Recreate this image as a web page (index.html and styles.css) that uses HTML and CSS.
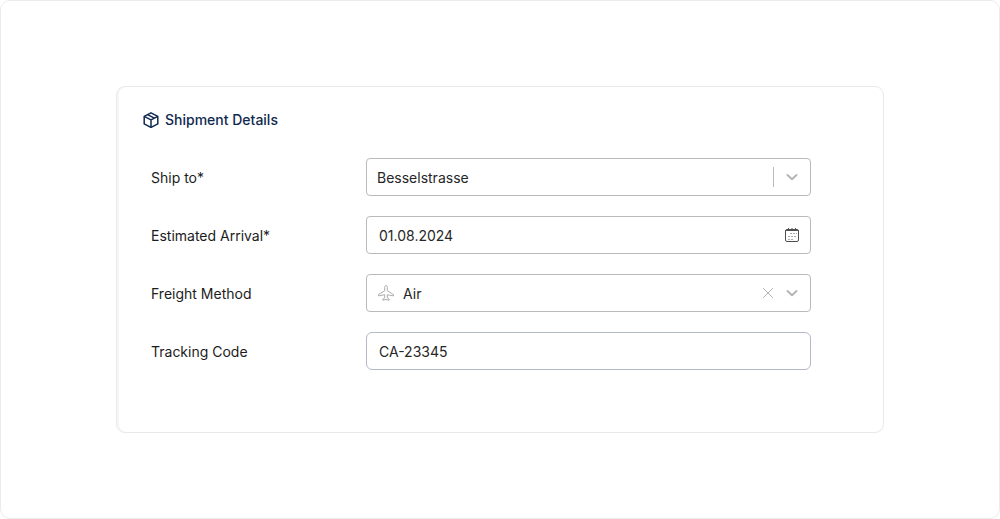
FILE: index.html
```html
<!DOCTYPE html>
<html lang="en">
<head>
  <meta charset="UTF-8">
  <meta name="viewport" content="width=device-width, initial-scale=1">
  <title>Shipment Details</title>
  <link rel="stylesheet" href="styles.css">
</head>
<body>

<main class="page">
  <form class="card">
    <h2 class="card-title">
      <svg class="title-icon" viewBox="0 0 16 16" aria-hidden="true">
        <path d="M8 .8 14.8 4.3v7.6L8 15.4 1.2 11.9V4.3z"/>
        <path d="M1.2 4.3 8 7.8l6.8-3.5M8 7.8v7.6M4.6 2.6l6.8 3.5"/>
      </svg>
      Shipment Details
    </h2>

    <div class="rows">
      <div class="row">
        <label for="shipTo">Ship to*</label>
        <div class="field">
          <select id="shipTo" class="control control-select">
            <option>Besselstrasse</option>
          </select>
          <span class="icons">
            <span class="separator"></span>
            <svg class="chevron" viewBox="0 0 20 20" aria-hidden="true">
              <path d="M5.5 8 10 12.2 14.5 8"/>
            </svg>
          </span>
        </div>
      </div>

      <div class="row">
        <label for="arrival">Estimated Arrival*</label>
        <div class="field">
          <input type="text" id="arrival" class="control" value="01.08.2024">
          <span class="icons">
            <svg class="calendar" viewBox="0 0 16 16" aria-hidden="true">
              <rect x="1.5" y="2.5" width="13" height="12" rx="1.5"/>
              <path d="M1.5 3.5h13M4.5 1v2.5M8 1v2.5M11.5 1v2.5"/>
              <path class="days" d="M6 6.5h7M4 9.5h9M4 12.5h6"/>
            </svg>
          </span>
        </div>
      </div>

      <div class="row">
        <label for="freight">Freight Method</label>
        <div class="field">
          <svg class="plane" viewBox="0 0 16 16" aria-hidden="true">
            <path d="M8 .5c-.9 0-1.3.9-1.3 1.9v3.4L.8 9.3c-.4.3-.5.8-.3 1.6l6.2-1.2v3.2l-1.9 1.3v1L8 14.5l3.2.7v-1l-1.9-1.3V9.7l6.2 1.2c.2-.8.1-1.3-.3-1.6L9.3 5.8V2.4C9.3 1.4 8.9.5 8 .5z"/>
          </svg>
          <select id="freight" class="control control-select control-with-icon">
            <option>Air</option>
          </select>
          <span class="icons">
            <button type="button" class="clear" aria-label="Clear">
              <svg viewBox="0 0 12 12" aria-hidden="true">
                <path d="M1.2 1.2l9.6 9.6M10.8 1.2 1.2 10.8"/>
              </svg>
            </button>
            <svg class="chevron" viewBox="0 0 20 20" aria-hidden="true">
              <path d="M5.5 8 10 12.2 14.5 8"/>
            </svg>
          </span>
        </div>
      </div>

      <div class="row">
        <label for="tracking">Tracking Code</label>
        <div class="field">
          <input type="text" id="tracking" class="control control-tracking" value="CA-23345">
        </div>
      </div>
    </div>
  </form>
</main>

</body>
</html>
```

FILE: styles.css
```css
* {
  box-sizing: border-box;
}
body {
  margin: 0;
  background: #fff;
  color: #1c1c1c;
  font-family: Inter, "Liberation Sans", sans-serif;
  font-size: 14px;
  line-height: 20px;
}
.page {
  display: flex;
  align-items: center;
  justify-content: center;
  min-height: 100vh;
  padding: 24px;
  border: 1px solid #ebebeb;
  border-radius: 10px;
}
.card {
  width: 100%;
  max-width: 768px;
  padding: 23px 26px 62px;
  border: 1px solid #e9e9e9;
  border-radius: 9px;
  box-shadow: inset 2px 0 0 #f6f6f6;
}
.card-title {
  display: flex;
  align-items: center;
  gap: 6px;
  margin: 0 0 28px;
  color: #10294f;
  font-size: 14px;
  font-weight: 500;
}
.title-icon {
  width: 16px;
  height: 16px;
  fill: none;
  stroke: currentColor;
  stroke-width: 1.5;
  stroke-linejoin: round;
}
.rows {
  display: grid;
  gap: 20px;
  padding: 0 46px 0 8px;
}
.row {
  display: flex;
  align-items: center;
}
.row label {
  flex: 0 0 215px;
  padding-top: 2px;
}
.field {
  position: relative;
  flex: 1;
  min-width: 0;
}

/* inputs and selects */
.control {
  display: block;
  width: 100%;
  height: 38px;
  padding: 0 12px;
  border: 1px solid #bababa;
  border-radius: 4px;
  background: #fff;
  color: #262626;
  font: inherit;
}
.control-select {
  appearance: none;
  padding: 2px 60px 0 10px;
}
.control-with-icon {
  padding-left: 36px;
}
.control-tracking {
  border-color: #b4b9c8;
  border-radius: 6px;
}

/* icons over the controls */
.icons {
  position: absolute;
  top: 0;
  right: 9px;
  bottom: 0;
  display: flex;
  align-items: center;
  gap: 8px;
  pointer-events: none;
}
.icons svg,
.plane {
  display: block;
  fill: none;
  stroke: #b5b5b5;
}
.separator {
  width: 1px;
  height: 20px;
  background: #bcbcbc;
}
.icons .chevron {
  width: 20px;
  height: 20px;
  stroke-width: 2;
  stroke-linecap: round;
  stroke-linejoin: round;
}
.icons .calendar {
  width: 16px;
  height: 16px;
  margin-right: 2px;
  stroke: #505050;
}
.icons .days {
  stroke: #aaa;
  stroke-dasharray: 2 1;
}
.plane {
  position: absolute;
  top: 11px;
  left: 12px;
  width: 16px;
  height: 16px;
  stroke: #999;
  stroke-width: .8;
  pointer-events: none;
}
.clear {
  padding: 0;
  border: 0;
  background: none;
  pointer-events: auto;
  cursor: pointer;
}
.clear svg {
  width: 12px;
  height: 12px;
}
```
